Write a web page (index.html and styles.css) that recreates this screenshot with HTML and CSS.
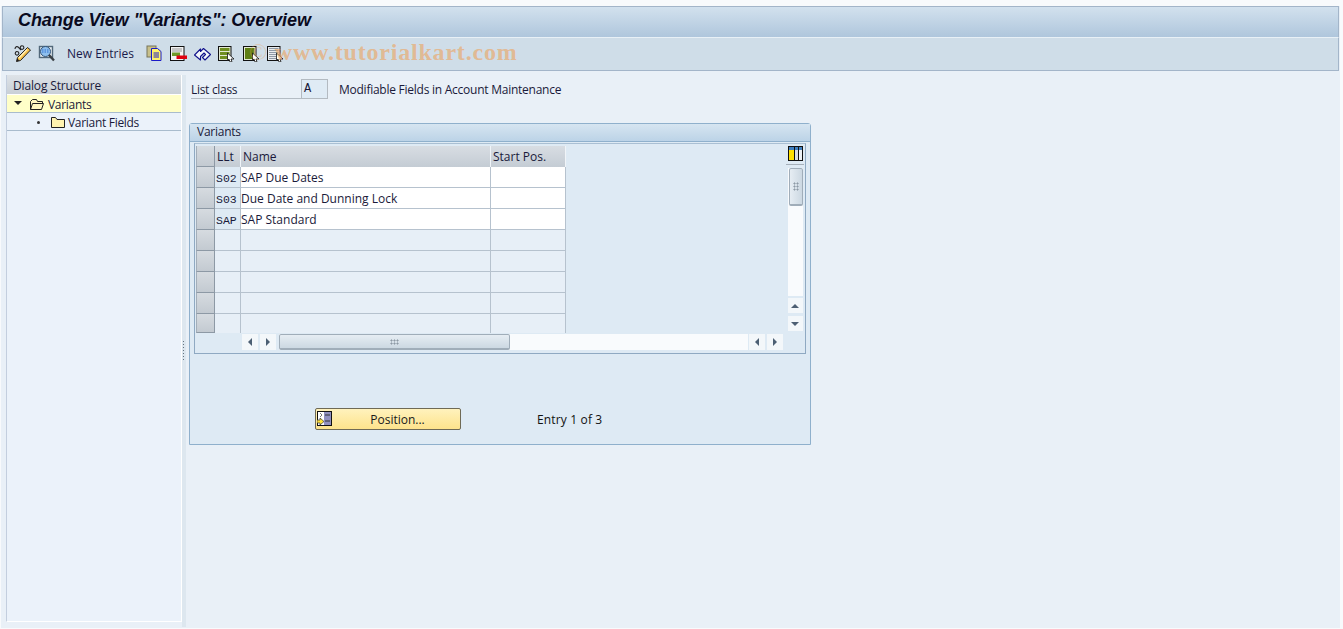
FILE: index.html
```html
<!DOCTYPE html>
<html lang="en">
<head>
    <meta charset="UTF-8">
    <title>Change View "Variants": Overview</title>
    <link rel="stylesheet" href="styles.css">
</head>
<body>

<div class="window">
    <header class="title-bar">
        <h1>Change View "Variants": Overview</h1>
    </header>

    <div class="toolbar">
        <svg class="tool" viewBox="0 0 17 17">
            <path d="M1 4c0-3 3-3 4-1l2 2M3 6.500a1.800 1.800 0 1 0 .1 0M8 .8a1.800 1.800 0 1 0 .1 0" fill="none" stroke="#222" stroke-width="1.100"/>
            <path d="M13.500 2.500l3 2.500-10 10.500-4 1 1-4z" fill="#f8c24a" stroke="#222"/>
            <path d="M13 4.500l-8 8.500" stroke="#fff3c0" stroke-width="1.200"/>
            <path d="M2.500 16.500l.7-3 2.300 2z" fill="#222"/>
        </svg>
        <svg class="tool" viewBox="0 0 17 17">
            <rect x="1.500" y="1.500" width="13" height="11" fill="#e6edf2" stroke="#52687a" stroke-width="1.400"/>
            <circle cx="7.500" cy="6.500" r="5" fill="#8fc0ee" stroke="#33557a"/>
            <path d="M4 5h7M4 7h7" stroke="#2f6fd0" stroke-dasharray="1.500 1"/>
            <path d="M11 10l5 5.500" stroke="#3a3f44" stroke-width="2.400"/>
        </svg>
        <span class="tool-text">New Entries</span>
        <svg class="tool" viewBox="0 0 17 17">
            <rect x="1" y="1" width="9" height="11" fill="#c8c08a" stroke="#77745a"/>
            <path d="M5.500 3.500h6l3.500 3v9h-9.500z" fill="#fff36a" stroke="#1a1ac8"/>
            <path d="M7.500 8h5.500M7.500 10h5.500M7.500 12h5.500" stroke="#1a1ac8"/>
        </svg>
        <svg class="tool" viewBox="0 0 17 17">
            <rect x=".5" y="1.500" width="13.500" height="14" fill="#f4f4f4" stroke="#111"/>
            <path d="M2 4h10M2 6h10" stroke="#999"/>
            <rect x="2" y="7.500" width="8" height="3.500" fill="#6f9a28"/>
            <rect x="6.500" y="10.500" width="10.500" height="3.500" fill="#e00010"/>
        </svg>
        <svg class="tool" viewBox="0 0 17 17">
            <path d="M.5 10l6-6v2.500l3-3 7 6-5.500 5.500-2.500-2.500 3-3-1.500-1.500-3.500 3.500v3.500z" fill="#f4f7fb" stroke="#12128c" stroke-width="1.100" stroke-linejoin="round"/>
        </svg>
        <svg class="tool tool-wide" viewBox="0 0 17 17">
            <rect x=".5" y="1.500" width="12.500" height="14" fill="#e2e8d2" stroke="#111"/>
            <rect x="2" y="3" width="9.500" height="3" fill="#6f8f20"/>
            <rect x="2" y="7" width="9.500" height="3" fill="#6f8f20"/>
            <rect x="2" y="11" width="9.500" height="3" fill="#6f8f20"/>
            <path d="M9.500 8l6.500 6h-3l1 2.700-2 .3-1-3-1.500 1.500z" fill="#fff" stroke="#111" stroke-width=".8"/>
        </svg>
        <svg class="tool" viewBox="0 0 17 17">
            <rect x=".5" y="1.500" width="12.500" height="14" fill="#e2e8d2" stroke="#111"/>
            <rect x="2" y="3" width="9.500" height="11" fill="#5f7f14"/>
            <path d="M9.500 8l6.500 6h-3l1 2.700-2 .3-1-3-1.500 1.500z" fill="#fff" stroke="#111" stroke-width=".8"/>
        </svg>
        <svg class="tool" viewBox="0 0 17 17">
            <rect x=".5" y="1.500" width="12.500" height="14" fill="#e8ecef" stroke="#111"/>
            <path d="M2 3.500h9.500M2 5.500h9.500M2 7.500h9.500M2 9.500h9.500M2 11.500h9.500M2 13.500h9.500" stroke="#8f9aa6"/>
            <path d="M9.500 8l6.500 6h-3l1 2.700-2 .3-1-3-1.500 1.500z" fill="#fff" stroke="#111" stroke-width=".8"/>
        </svg>
        <span class="watermark"><span class="watermark-mark">©</span> www.tutorialkart.com</span>
    </div>

    <div class="content">
        <aside class="tree">
            <div class="tree-head">Dialog Structure</div>
            <div class="tree-row tree-row-active">
                <span class="tree-arrow"></span>
                <svg class="folder" viewBox="0 0 16 13"><path d="M1.500 11.500v-8l2-2h4l1 2h5v2M1.500 11.500l2-6h11l-2 6z" fill="#fff7c0" stroke="#222"/></svg>
                <span>Variants</span>
            </div>
            <div class="tree-row tree-row-child">
                <span class="tree-dot"></span>
                <svg class="folder" viewBox="0 0 16 13"><path d="M1.500 11.500v-10h4l1.500 2h7.500v8z" fill="#fff3b0" stroke="#222"/></svg>
                <span>Variant Fields</span>
            </div>
        </aside>

        <div class="splitter"><span class="grip"></span></div>

        <main class="main">
            <div class="list-class">
                <label class="field-label">List class</label>
                <span class="field-input">A</span>
                <span class="field-text">Modifiable Fields in Account Maintenance</span>
            </div>

            <section class="group">
                <div class="group-title">Variants</div>
                <div class="group-body">
                    <div class="tc">
                        <div class="tc-top">
                            <table class="grid">
                                <colgroup>
                                    <col class="col-sel"><col class="col-key"><col class="col-name"><col class="col-pos">
                                </colgroup>
                                <thead>
                                    <tr><th class="sel"></th><th>LLt</th><th>Name</th><th>Start Pos.</th></tr>
                                </thead>
                                <tbody>
                                    <tr class="filled"><td class="sel"></td><td class="key">S02</td><td class="name">SAP Due Dates</td><td></td></tr>
                                    <tr class="filled"><td class="sel"></td><td class="key">S03</td><td class="name">Due Date and Dunning Lock</td><td></td></tr>
                                    <tr class="filled"><td class="sel"></td><td class="key">SAP</td><td class="name">SAP Standard</td><td></td></tr>
                                    <tr><td class="sel"></td><td></td><td></td><td></td></tr>
                                    <tr><td class="sel"></td><td></td><td></td><td></td></tr>
                                    <tr><td class="sel"></td><td></td><td></td><td></td></tr>
                                    <tr><td class="sel"></td><td></td><td></td><td></td></tr>
                                    <tr class="last"><td class="sel"></td><td></td><td></td><td></td></tr>
                                </tbody>
                            </table>
                            <div class="vscroll">
                                <div class="settings-btn">
                                    <svg class="settings" viewBox="0 0 15 15">
                                        <rect x=".5" y=".5" width="14" height="14" fill="#fff" stroke="#111"/>
                                        <rect x="1" y="1" width="13" height="3" fill="#3f7fc0"/>
                                        <rect x="1" y="4" width="5" height="10" fill="#ffe000"/>
                                        <path d="M6.500 1v13M10.500 1v13" stroke="#111"/>
                                        <rect x="7" y="4" width="3" height="10" fill="#d8dde2"/>
                                        <rect x="11" y="4" width="3" height="10" fill="#eef1f4"/>
                                    </svg>
                                </div>
                                <div class="v-track">
                                    <div class="v-thumb"><span class="dots dots-v"></span></div>
                                </div>
                                <div class="arrow-btn"><span class="tri tri-up"></span></div>
                                <div class="arrow-btn"><span class="tri tri-down"></span></div>
                            </div>
                        </div>
                        <div class="hscroll">
                            <div class="arrow-btn"><span class="tri tri-left"></span></div>
                            <div class="arrow-btn"><span class="tri tri-right"></span></div>
                            <div class="h-track">
                                <div class="h-thumb"><span class="dots dots-h"></span></div>
                            </div>
                            <div class="arrow-btn"><span class="tri tri-left"></span></div>
                            <div class="arrow-btn"><span class="tri tri-right"></span></div>
                        </div>
                    </div>

                    <div class="position-row">
                        <button class="btn">
                            <svg class="btn-icon" viewBox="0 0 15 15">
                                <rect x=".5" y=".5" width="14" height="14" fill="#fff" stroke="#111"/>
                                <rect x="7" y="1" width="7" height="13" fill="#8f8fc0"/>
                                <path d="M8 4h5M8 10h5" stroke="#333"/>
                                <path d="M3 2l2 2-2 2" fill="none" stroke="#777"/>
                                <path d="M0 9h3v-2l4 3.500-4 3.500v-2h-3z" fill="#ffe23a" stroke="#333" stroke-width=".7"/>
                            </svg>
                            <span>Position...</span>
                        </button>
                        <span class="entry-text">Entry 1 of 3</span>
                    </div>
                </div>
            </section>
        </main>
    </div>
</div>

</body>
</html>
```

FILE: styles.css
```css
html, body {
    height: 100%;
}
body {
    margin: 0;
    background-color: #f8fafc;
    font-family: "Open Sans", "Noto Sans", sans-serif;
    font-size: 12px;
    color: #1a1a3a;
    overflow: hidden;
}
.window {
    display: flex;
    flex-direction: column;
    width: 1339px;
    height: 622px;
    margin: 6px 0 0 1px;
    background-color: #e9f0f7;
}
.title-bar {
    height: 31px;
    flex: none;
    box-sizing: border-box;
    margin: 0 1px;
    border: 1px solid #a3b5c9;
    border-bottom: none;
    background: linear-gradient(#d2e1ee, #afc6dc);
    padding-left: 15px;
}
.title-bar h1 {
    margin: 0;
    font-family: "Liberation Sans", Arial, sans-serif;
    font-size: 18px;
    font-style: italic;
    font-weight: bold;
    line-height: 27px;
    letter-spacing: -.06px;
    color: #0a0a1e;
}
.toolbar {
    position: relative;
    display: flex;
    align-items: center;
    height: 34px;
    flex: none;
    box-sizing: border-box;
    margin: 0 1px;
    border: 1px solid #a3b5c9;
    border-top: 1px solid #e8f0f6;
    background-color: #cfdde8;
    padding: 0 0 2px 11px;
}
.tool {
    width: 17px;
    height: 17px;
    flex: none;
    margin-right: 7px;
}
.tool-wide {
    margin-right: 8px;
}
.tool-text {
    margin: 0 12px 0 5px;
    color: #1a1a4a;
}
.watermark {
    position: absolute;
    left: 246px;
    top: 1px;
    font-family: "Liberation Serif", serif;
    font-size: 24px;
    font-weight: bold;
    letter-spacing: .8px;
    color: rgba(235, 165, 100, .65);
}
.watermark-mark {
    font-weight: normal;
    color: rgba(235, 165, 100, .4);
}
.content {
    flex: 1;
    display: flex;
    min-height: 0;
    padding: 4px 0 1px 5px;
}
.tree {
    width: 176px;
    flex: none;
    box-sizing: border-box;
    margin-bottom: 5px;
    background-color: #ebf2fa;
    border-left: 1px solid #c3cede;
    border-right: 1px solid #fff;
    border-bottom: 1px solid #fff;
}
.tree-head {
    height: 19px;
    line-height: 21px;
    padding-left: 6px;
    letter-spacing: -.15px;
    background: linear-gradient(#dee3e8, #c9d0d7);
    border-bottom: 1px solid #fff;
}
.tree-row {
    display: flex;
    align-items: center;
    height: 18px;
    box-sizing: border-box;
    padding-top: 1px;
    letter-spacing: -.3px;
    border-bottom: 1px solid #a9bccd;
}
.tree-row-active {
    background-color: #ffffc8;
}
.tree-row-active .folder {
    margin-right: 3px;
}
.tree-row-child {
    background-color: #ebf2fa;
}
.tree-arrow {
    width: 0;
    height: 0;
    margin: 0 7px 2px 7px;
    border: 4px solid transparent;
    border-top: 4px solid #222;
    border-bottom: none;
}
.tree-dot {
    width: 3px;
    height: 3px;
    margin: 0 10px 0 30px;
    background-color: #333;
    border-radius: 50%;
}
.folder {
    width: 16px;
    height: 13px;
    margin-right: 2px;
}
.splitter {
    width: 4px;
    flex: none;
    display: flex;
    align-items: center;
    background-color: #dde7ef;
}
.grip {
    width: 1px;
    height: 20px;
    margin-left: 1px;
    background-image: linear-gradient(#66737f 50%, transparent 50%);
    background-size: 1px 3px;
}
.main {
    flex: 1;
    padding-left: 3px;
}
.list-class {
    display: flex;
    align-items: center;
    height: 20px;
    margin-top: 4px;
    margin-left: 2px;
}
.field-label {
    width: 110px;
    height: 20px;
    line-height: 21px;
    box-sizing: border-box;
    letter-spacing: -.3px;
    border-bottom: 1px solid #b4bcc4;
}
.field-input {
    width: 27px;
    height: 20px;
    box-sizing: border-box;
    border: 1px solid #b3bac1;
    background-color: #dfebf5;
    padding-left: 2px;
    font-family: "Liberation Mono", monospace;
    font-size: 12px;
    line-height: 18px;
}
.field-text {
    margin-left: 11px;
    letter-spacing: -.25px;
}
.group {
    width: 622px;
    margin-top: 24px;
    box-sizing: border-box;
    border: 1px solid #8fb0cc;
    border-radius: 3px 3px 0 0;
    background-color: #deeaf4;
}
.group-title {
    height: 17px;
    line-height: 16px;
    padding-left: 7px;
    letter-spacing: -.25px;
    background: linear-gradient(#d6e5f1, #bcd3e7);
    border-bottom: 1px solid #8fb0cc;
}
.group-body {
    height: 301px;
    padding: 1px 4px 0 4px;
}
.tc {
    width: 612px;
    height: 211px;
    box-sizing: border-box;
    border: 1px solid #8fa9c2;
    border-top-color: #a9bfd3;
}
.tc-top {
    display: flex;
    height: 190px;
    padding: 2px 1px 0 1px;
    box-sizing: border-box;
}
.grid {
    table-layout: fixed;
    border-collapse: separate;
    border-spacing: 0;
    width: 370px;
    height: 187px;
}
.col-sel { width: 19px; }
.col-key { width: 26px; }
.col-name { width: 250px; }
.col-pos { width: 75px; }
.grid th {
    height: 21px;
    box-sizing: border-box;
    padding: 0 0 0 2px;
    text-align: left;
    font-weight: normal;
    background: linear-gradient(#d8dde3, #c4ccd4);
    border-right: 1px solid #f0f4f8;
}
.grid td {
    height: 21px;
    box-sizing: border-box;
    padding: 0;
    border-right: 1px solid #b6c2ce;
    border-bottom: 1px solid #b6c2ce;
    background-color: #e7eff7;
}
.grid .last td {
    height: 19px;
    border-bottom: none;
}
.grid th.sel, .grid td.sel, .grid .last td.sel {
    padding: 0;
    background: linear-gradient(#d6dbe0, #c3cad1);
    border-right: 1px solid #8d99a5;
    border-bottom: 1px solid #8d99a5;
    border-left: 1px solid #a3aeb9;
}
.grid .filled td {
    background-color: #fff;
}
.grid .filled td.sel {
    background: linear-gradient(#d6dbe0, #c3cad1);
}
.grid .filled td.key {
    background-color: #deeaf4;
    font-family: "Liberation Mono", monospace;
    font-size: 11.5px;
    padding: 3px 0 0 1px;
    white-space: nowrap;
}
.grid td.name {
    white-space: nowrap;
}
.vscroll {
    display: flex;
    flex-direction: column;
    align-items: center;
    width: 18px;
    margin-left: auto;
}
.settings-btn {
    width: 18px;
    height: 18px;
    display: flex;
    justify-content: center;
    border-bottom: 1px solid #a6b0ba;
}
.settings {
    width: 15px;
    height: 15px;
}
.v-track {
    width: 15px;
    height: 128px;
    margin: 3px 0 2px 0;
    background-color: #f9fbfd;
}
.v-thumb {
    display: flex;
    align-items: center;
    justify-content: center;
    width: 14px;
    height: 38px;
    margin-left: 1px;
    box-sizing: border-box;
    border: 1px solid #a0adb9;
    border-bottom: 2px solid #a0adb9;
    border-radius: 2px;
    background: linear-gradient(90deg, #e6edf3, #ccd8e2);
}
.hscroll {
    display: flex;
    height: 19px;
    padding-left: 47px;
}
.arrow-btn {
    display: flex;
    align-items: center;
    justify-content: center;
    width: 16px;
    height: 16px;
    margin-right: 2px;
    background-color: #f3f7fa;
}
.vscroll .arrow-btn {
    width: 15px;
    height: 15px;
    margin: 0 0 3px 0;
}
.h-track {
    width: 469px;
    height: 16px;
    margin: 0 1px 0 1px;
    background-color: #f9fbfd;
}
.h-thumb {
    display: flex;
    align-items: center;
    justify-content: center;
    width: 231px;
    height: 16px;
    box-sizing: border-box;
    border: 1px solid #a0adb9;
    border-bottom: 2px solid #a0adb9;
    border-radius: 2px;
    background: linear-gradient(#e6edf3, #ccd8e2);
}
.dots {
    background-image: radial-gradient(#8d99a5 45%, transparent 50%);
    background-size: 3px 3px;
}
.dots-v {
    width: 6px;
    height: 9px;
}
.dots-h {
    width: 9px;
    height: 6px;
}
.tri {
    width: 0;
    height: 0;
    border: 4px solid transparent;
}
.tri-up {
    border-top: none;
    border-bottom: 4px solid #4c5f73;
}
.tri-down {
    border-bottom: none;
    border-top: 4px solid #4c5f73;
}
.tri-left {
    border-left: none;
    border-right: 4px solid #4c5f73;
}
.tri-right {
    border-right: none;
    border-left: 4px solid #4c5f73;
}
.position-row {
    display: flex;
    align-items: center;
    height: 22px;
    margin-top: 54px;
    padding-left: 121px;
}
.btn {
    position: relative;
    width: 146px;
    height: 22px;
    padding: 0 0 0 19px;
    border: 1px solid #6f6a55;
    border-radius: 2px;
    background: linear-gradient(#fff2bd, #fde38c);
    font-family: inherit;
    font-size: 12px;
    color: #1a1a1a;
}
.btn-icon {
    position: absolute;
    left: 1px;
    top: 2px;
    width: 15px;
    height: 15px;
}
.entry-text {
    margin-left: 76px;
    letter-spacing: .15px;
    color: #111;
}
```
